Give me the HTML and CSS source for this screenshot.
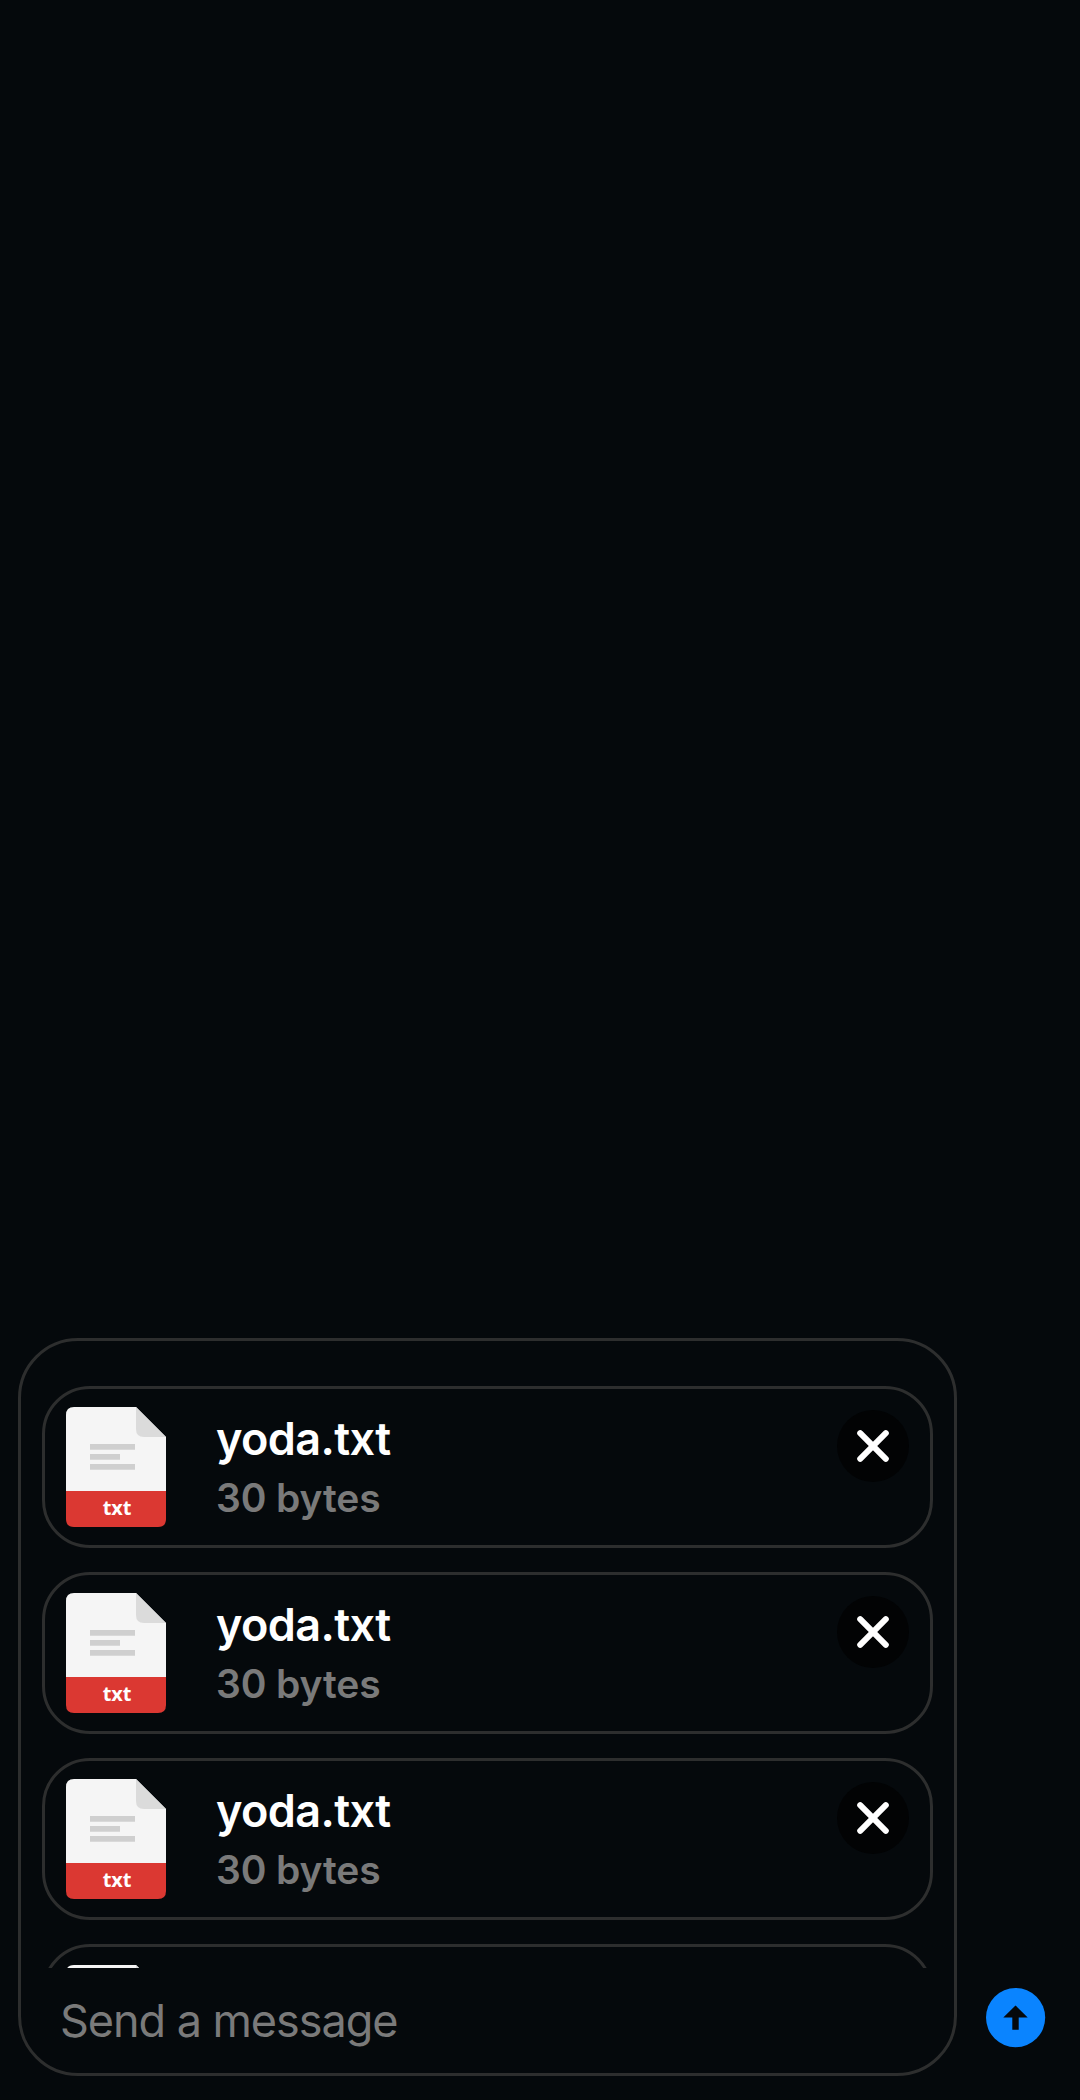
FILE: index.html
```html
<!DOCTYPE html>
<html lang="en">
<head>
<meta charset="utf-8">
<title>Message composer</title>
<link rel="stylesheet" href="styles.css">
</head>
<body>
<svg class="defs" width="0" height="0" aria-hidden="true">
  <symbol id="file" viewBox="0 0 100 120">
    <path d="M8 0H70L100 30V84H0V8Q0 0 8 0Z" fill="#f5f5f5"/>
    <path d="M70 0L100 30H78Q70 30 70 22Z" fill="#dbdbdb"/>
    <path d="M24 37.1h45v5.6H24zM24 47.1h30v5.6H24zM24 57.1h45v5.6H24z" fill="#cfcfcf"/>
    <path d="M0 84H100V112Q100 120 92 120H8Q0 120 0 112Z" fill="#db3832"/>
  </symbol>
  <symbol id="close" viewBox="0 0 32 32">
    <path d="M3.2 3.2L28.8 28.8M28.8 3.2L3.2 28.8" stroke="#fff" stroke-width="6" stroke-linecap="round"/>
  </symbol>
</svg>
<main class="screen">
  <section class="composer">
    <div class="input-box">
      <div class="files">
        <article class="file">
          <div class="thumb"><svg><use href="#file"/></svg><span class="ext">txt</span></div>
          <div class="info"><div class="name">yoda.txt</div><div class="size">30 bytes</div></div>
          <button class="remove" aria-label="Remove"><svg><use href="#close"/></svg></button>
        </article>
        <article class="file">
          <div class="thumb"><svg><use href="#file"/></svg><span class="ext">txt</span></div>
          <div class="info"><div class="name">yoda.txt</div><div class="size">30 bytes</div></div>
          <button class="remove" aria-label="Remove"><svg><use href="#close"/></svg></button>
        </article>
        <article class="file">
          <div class="thumb"><svg><use href="#file"/></svg><span class="ext">txt</span></div>
          <div class="info"><div class="name">yoda.txt</div><div class="size">30 bytes</div></div>
          <button class="remove" aria-label="Remove"><svg><use href="#close"/></svg></button>
        </article>
        <article class="file">
          <div class="thumb"><svg><use href="#file"/></svg></div>
        </article>
      </div>
      <div class="placeholder">Send a message</div>
    </div>
    <button class="send" aria-label="Send">
      <svg viewBox="0 0 60 60"><circle cx="29.6" cy="29.6" r="29.6" fill="#0a84ff"/><path d="M29.5 17.4L41.7 29.4H32.7V41.7H26.3V29.4H17.3Z" fill="#05090c"/></svg>
    </button>
  </section>
</main>
</body>
</html>
```
FILE: styles.css
```css
* { box-sizing: border-box; }
body { margin: 0; background: #05090c; font-family: Inter, "Liberation Sans", sans-serif; }
.defs { display: block; }
.screen { height: 2100px; display: flex; flex-direction: column; justify-content: flex-end; overflow: hidden; }
.composer { display: flex; align-items: flex-end; gap: 29px; padding: 0 0 24px 18px; }
.input-box { width: 939px; height: 738px; border: 3px solid #2d2e2e; border-radius: 60px; padding: 0 21px; }
.files { width: 891px; height: 627px; padding-top: 45px; display: flex; flex-direction: column; gap: 24px; overflow: hidden; }
.file { flex: none; height: 162px; border: 3px solid #2d2e2e; border-radius: 48px; padding: 18px 21px; display: flex; }
.thumb { position: relative; width: 100px; height: 120px; }
.thumb svg { display: block; width: 100px; height: 120px; }
.ext { position: absolute; left: 0; right: 0; bottom: 0; height: 36px; padding-left: 2px; line-height: 34px; text-align: center; font-family: "Open Sans", "Noto Sans", sans-serif; font-size: 20px; font-weight: 700; letter-spacing: -0.2px; color: #fff; }
.info { flex: 1; padding: 5px 0 0 50px; font-weight: 600; white-space: nowrap; }
.name { font-size: 45px; line-height: 54px; letter-spacing: -0.6px; color: #fff; }
.size { font-size: 39px; line-height: 48px; margin-top: 8px; letter-spacing: -0.1px; color: #7a7a7a; }
.remove { width: 72px; height: 72px; margin-top: 3px; padding: 20px; border: 0; border-radius: 50%; background: #020304; }
.remove svg { display: block; width: 32px; height: 32px; }
.placeholder { padding: 26px 0 0 18px; font-size: 45px; line-height: 54px; letter-spacing: -1.05px; color: #7a7a7a; white-space: nowrap; }
.send { width: 60px; height: 60px; margin-bottom: 28px; padding: 0; border: 0; background: none; }
.send svg { display: block; width: 60px; height: 60px; }
```
